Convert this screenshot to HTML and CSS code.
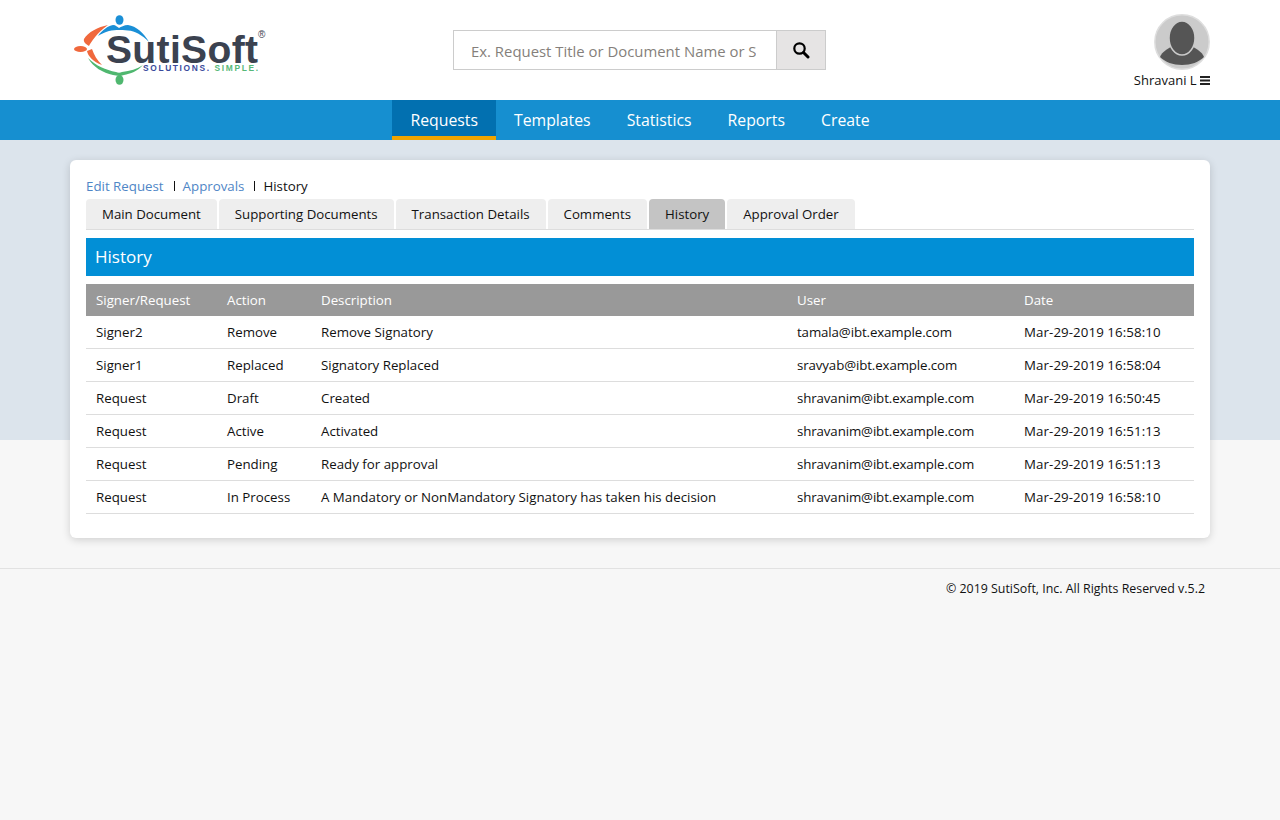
FILE: index.html
```html
<!DOCTYPE html>
<html lang="en">

<head>
    <meta charset="UTF-8">
    <title>SutiSoft - History</title>
    <link rel="stylesheet" href="styles.css">
</head>

<body>
    <header class="top-bar">
        <a class="logo" href="#">
            <svg width="200" height="90" viewBox="70 5 200 90">
                <ellipse cx="119.5" cy="20" rx="4" ry="4.8" fill="#1a8fd6" />
                <path d="M98 36 C102 30 108 26 113 25 C116 25 117 27 119 28 C121 27 124 25 128 25 C136 26 144 33 149 42 C142 35 135 31 128 30.5 C124 30 121 30 119 30 C116 30 112 30 109 31 C105 32 101 34 98 36 Z" fill="#1a8fd6" />
                <ellipse cx="119.5" cy="80" rx="4" ry="4.8" fill="#4fb76f" />
                <path d="M88 58 C96 66 106 70 116 72 C118 73 120 73 122 72 C130 71 137 69 143 65 C138 71 130 74 124 75 C121 76 120 76 119 76 C117 76 115 75 113 75 C103 73 93 67 88 58 Z" fill="#4fb76f" />
                <ellipse cx="80.5" cy="49" rx="6.5" ry="3" fill="#f0683c" />
                <path d="M108 25 C98 27 88 32 84 39 C83 42 86 44 89 46 C91 42 97 33 108 25 Z" fill="#f0683c" />
                <path d="M87 51 C88 56 93 62 102 65 C97 60 94 55 92 49 Z" fill="#f0683c" />
                <text class="logo-name" x="106" y="63" textLength="152">SutiSoft</text>
                <text class="logo-tag" x="143" y="71" textLength="115"><tspan fill="#3a4a9c">SOLUTIONS.</tspan> <tspan fill="#56b878">SIMPLE.</tspan></text>
                <text class="logo-mark" x="258" y="38">®</text>
            </svg>
        </a>
        <form class="search">
            <input class="search-input" type="text" placeholder="Ex. Request Title or Document Name or Signer">
            <button class="search-btn" type="button" aria-label="Search">
                <svg width="18" height="18" viewBox="0 0 18 18">
                    <circle cx="7.5" cy="7.5" r="5.2" fill="none" stroke="#000" stroke-width="2.2" />
                    <path d="M11.5 11.5 L16 16" stroke="#000" stroke-width="3" stroke-linecap="round" />
                </svg>
            </button>
        </form>
        <div class="user">
            <svg class="avatar" width="58" height="58" viewBox="0 0 58 58">
                <circle cx="29" cy="29" r="27.2" fill="#cbcbcb" stroke="#dedede" stroke-width="1.5" />
                <path d="M7 44 C9 39 14 36 18 34 L40 34 C44 36 49 39 51 44 C46 49 38 52 29 52 C20 52 12 49 7 44 Z" fill="#555" />
                <ellipse cx="29" cy="25" rx="13" ry="17" fill="#555" stroke="#cbcbcb" stroke-width="1.5" />
            </svg>
            <div class="user-name">Shravani L
                <svg width="10" height="9" viewBox="0 0 10 9">
                    <path d="M0 1 H10 M0 4.5 H10 M0 8 H10" stroke="#222" stroke-width="2" />
                </svg>
            </div>
        </div>
    </header>

    <nav class="main-nav">
        <a class="nav-item active" href="#">Requests</a>
        <a class="nav-item" href="#">Templates</a>
        <a class="nav-item" href="#">Statistics</a>
        <a class="nav-item" href="#">Reports</a>
        <a class="nav-item" href="#">Create</a>
    </nav>

    <main class="content">
        <section class="card">
            <div class="crumbs">
                <a href="#">Edit Request</a>
                <span class="sep"></span>
                <a href="#">Approvals</a>
                <span class="sep"></span>
                <span>History</span>
            </div>

            <div class="tabs">
                <a class="tab" href="#">Main Document</a>
                <a class="tab" href="#">Supporting Documents</a>
                <a class="tab" href="#">Transaction Details</a>
                <a class="tab" href="#">Comments</a>
                <a class="tab selected" href="#">History</a>
                <a class="tab" href="#">Approval Order</a>
            </div>

            <h2 class="section-title">History</h2>

            <table class="history">
                <thead>
                    <tr>
                        <th class="col-signer">Signer/Request</th>
                        <th class="col-action">Action</th>
                        <th class="col-desc">Description</th>
                        <th class="col-user">User</th>
                        <th>Date</th>
                    </tr>
                </thead>
                <tbody>
                    <tr>
                        <td>Signer2</td>
                        <td>Remove</td>
                        <td>Remove Signatory</td>
                        <td class="cell-user">tamala@ibt.example.com</td>
                        <td class="cell-date">Mar-29-2019 16:58:10</td>
                    </tr>
                    <tr>
                        <td>Signer1</td>
                        <td>Replaced</td>
                        <td>Signatory Replaced</td>
                        <td class="cell-user">sravyab@ibt.example.com</td>
                        <td class="cell-date">Mar-29-2019 16:58:04</td>
                    </tr>
                    <tr>
                        <td>Request</td>
                        <td>Draft</td>
                        <td>Created</td>
                        <td class="cell-user">shravanim@ibt.example.com</td>
                        <td class="cell-date">Mar-29-2019 16:50:45</td>
                    </tr>
                    <tr>
                        <td>Request</td>
                        <td>Active</td>
                        <td>Activated</td>
                        <td class="cell-user">shravanim@ibt.example.com</td>
                        <td class="cell-date">Mar-29-2019 16:51:13</td>
                    </tr>
                    <tr>
                        <td>Request</td>
                        <td>Pending</td>
                        <td>Ready for approval</td>
                        <td class="cell-user">shravanim@ibt.example.com</td>
                        <td class="cell-date">Mar-29-2019 16:51:13</td>
                    </tr>
                    <tr>
                        <td>Request</td>
                        <td>In Process</td>
                        <td>A Mandatory or NonMandatory Signatory has taken his decision</td>
                        <td class="cell-user">shravanim@ibt.example.com</td>
                        <td class="cell-date">Mar-29-2019 16:58:10</td>
                    </tr>
                </tbody>
            </table>
        </section>
    </main>

    <footer class="page-footer">© 2019 SutiSoft, Inc. All Rights Reserved v.5.2</footer>
</body>

</html>
```

FILE: styles.css
```css
* {
    box-sizing: border-box;
}

html,
body {
    height: 100%;
}

body {
    margin: 0;
    background-color: #f7f7f7;
    color: #111;
    font-family: "Open Sans", "Noto Sans", sans-serif;
    font-size: 13.3px;
}

a {
    text-decoration: none;
}

/* header */
.top-bar {
    display: grid;
    grid-template-columns: 383px 373px 1fr;
    height: 100px;
    padding: 0 70px;
    background-color: #fff;
}

.logo {
    display: block;
    padding-top: 5px;
}

.logo svg {
    display: block;
}

.logo-name {
    font-family: "Liberation Sans", sans-serif;
    font-size: 39px;
    font-weight: bold;
    fill: #3b4250;
}

.logo-tag {
    font-family: "Liberation Sans", sans-serif;
    font-size: 8.4px;
    font-weight: bold;
}

.logo-mark {
    font-family: "Liberation Sans", sans-serif;
    font-size: 10px;
    fill: #3b4250;
}

.search {
    display: flex;
    height: 40px;
    margin-top: 30px;
}

.search-input {
    flex: 1;
    min-width: 0;
    padding: 2px 20px 0 17px;
    border: 1px solid #ccc;
    border-right: 0;
    border-radius: 0;
    font-family: inherit;
    font-size: 14.9px;
    outline: none;
}

.search-input::placeholder {
    color: #857f7b;
}

.search-btn {
    display: flex;
    align-items: center;
    justify-content: center;
    width: 50px;
    padding: 0;
    border: 1px solid #ccc;
    background-color: #e6e4e4;
}

.user {
    display: flex;
    flex-direction: column;
    align-items: flex-end;
    padding-top: 13px;
}

.avatar {
    display: block;
    margin-right: -1px;
}

.user-name {
    font-size: 13px;
    line-height: 18px;
    white-space: nowrap;
}

/* navigation */
.main-nav {
    display: flex;
    justify-content: center;
    height: 40px;
    background-color: #168fd0;
}

.nav-item {
    padding: 0 18px;
    color: #fff;
    font-size: 15.8px;
    line-height: 40px;
}

.nav-item.active {
    border-bottom: 4px solid #f0a400;
    background-color: #0270b0;
}

/* content */
.content {
    padding: 20px 70px 30px;
    background: linear-gradient(#dce4ec, #dce4ec) no-repeat top / 100% 300px;
}

.card {
    height: 378px;
    padding: 16px 16px 0;
    border-radius: 6px;
    background-color: #fff;
    box-shadow: 0 2px 8px rgba(0, 0, 0, 0.16);
}

.crumbs {
    display: flex;
    align-items: center;
    height: 20px;
}

.crumbs a {
    color: #4f86c6;
}

.sep {
    width: 1px;
    height: 10px;
    margin: 0 8px 0 10px;
    background-color: #111;
}

.tabs {
    display: flex;
    gap: 2px;
    height: 31px;
    margin-top: 3px;
    border-bottom: 1px solid #ddd;
}

.tab {
    height: 30px;
    padding: 0 16px;
    border-radius: 4px 4px 0 0;
    background-color: #eee;
    color: #111;
    font-size: 13.25px;
    line-height: 30px;
}

.tab.selected {
    background-color: #c4c4c4;
}

.section-title {
    height: 38px;
    margin: 8px 0;
    padding-left: 9px;
    background-color: #028fd6;
    color: #fff;
    font-size: 17px;
    font-weight: normal;
    line-height: 38px;
}

.history {
    width: 100%;
    border-collapse: separate;
    border-spacing: 0;
    table-layout: fixed;
}

.history th {
    height: 32px;
    padding: 0 10px;
    background-color: #999;
    color: #fff;
    font-weight: normal;
    text-align: left;
}

.history td {
    height: 33px;
    padding: 0 10px;
    border-bottom: 1px solid #ddd;
}

.history .cell-user {
    letter-spacing: -0.12px;
}

.history .cell-date {
    letter-spacing: 0.08px;
}

.col-signer {
    width: 131px;
}

.col-action {
    width: 94px;
}

.col-desc {
    width: 476px;
}

.col-user {
    width: 227px;
}

/* footer */
.page-footer {
    padding: 11px 75px 0 0;
    border-top: 1px solid #e2e2e2;
    font-size: 12.4px;
    line-height: 18px;
    text-align: right;
}
```
